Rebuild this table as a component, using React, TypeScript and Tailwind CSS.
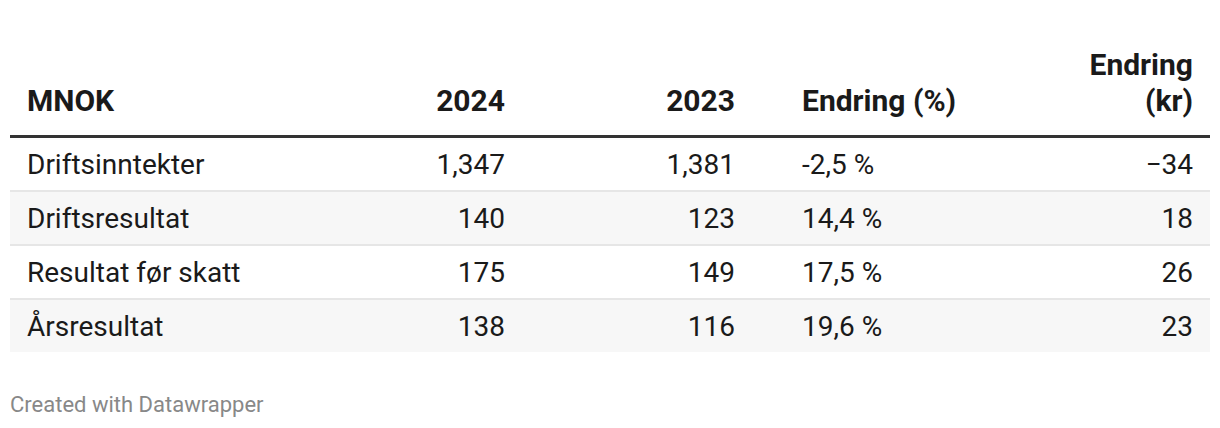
import React from "react";

const rows = [
  ["Driftsinntekter", "1,347", "1,381", "-2,5 %", "\u221234"],
  ["Driftsresultat", "140", "123", "14,4 %", "18"],
  ["Resultat før skatt", "175", "149", "17,5 %", "26"],
  ["Årsresultat", "138", "116", "19,6 %", "23"],
];

const grid = "grid grid-cols-[290px_222px_230px_300px_158px]";

export default function App() {
  return (
    <div
      className="w-[1220px] h-[428px] bg-white px-[10px] pt-[47px] text-[#1a1a1a]"
      style={{ fontFamily: "Roboto, 'Liberation Sans', sans-serif" }}
    >
      <div className={`${grid} items-end border-b-[3px] border-[#333] pb-[16px] text-[30px] leading-[36px] font-bold`}>
        <div className="pl-[17px]">MNOK</div>
        <div className="text-right pr-[17px]">2024</div>
        <div className="text-right pr-[17px]">2023</div>
        <div className="pl-[50px]">Endring (%)</div>
        <div className="text-right pr-[17px]">
          Endring
          <br />
          (kr)
        </div>
      </div>
      {rows.map((r, i) => (
        <div
          key={i}
          className={`${grid} text-[28px] leading-[34px] pt-[10px] pb-[8px] ${i % 2 === 1 ? "bg-[#f7f7f7]" : "bg-white"} ${i < rows.length - 1 ? "border-b-2 border-[#e6e6e6]" : ""}`}
        >
          <div className="pl-[17px]">{r[0]}</div>
          <div className="text-right pr-[17px]">{r[1]}</div>
          <div className="text-right pr-[17px]">{r[2]}</div>
          <div className="pl-[50px]">{r[3]}</div>
          <div className="text-right pr-[17px]">{r[4]}</div>
        </div>
      ))}
      <div className="mt-[40px] text-[22px] leading-[26px] text-[#888]">Created with Datawrapper</div>
    </div>
  );
}
